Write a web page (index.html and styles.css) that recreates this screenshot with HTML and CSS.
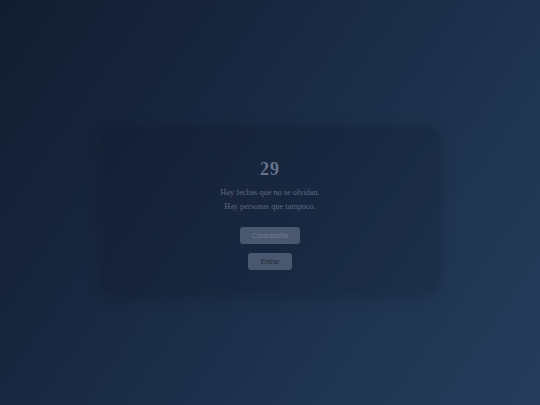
FILE: index.html
```html
<!DOCTYPE html>
<html lang="es">
<head>
  <meta charset="UTF-8" />
  <meta name="viewport" content="width=device-width, initial-scale=1" />
  <title>29</title>
  <link rel="stylesheet" href="styles.css">
</head>
<body>

  <div class="lock">
    <div class="card">
      <h1 class="day">29</h1>
      <p class="line">Hay fechas que no se olvidan.</p>
      <p class="line">Hay personas que tampoco.</p>

      <form class="login" onsubmit="return false;">
        <input type="password" class="pass" placeholder="Contraseña" />
        <button type="submit" class="enter">Entrar</button>
      </form>
    </div>
  </div>

</body>
</html>
```

FILE: styles.css
```css
* {
  box-sizing: border-box;
  margin: 0;
  padding: 0;
}
body {
  min-height: 100vh;
  background: linear-gradient(125deg, #121c2f 0%, #1a2b45 45%, #203653 75%, #243d5b 100%);
  font-family: 'Liberation Serif', 'Times New Roman', serif;
  color: #616c80;
}
.lock {
  min-height: 100vh;
  display: flex;
  align-items: center;
  justify-content: center;
  padding-top: 14px;
}
.card {
  width: 337px;
  height: 165px;
  border-radius: 12px;
  background: rgba(12, 20, 36, 0.22);
  box-shadow: 0 4px 18px rgba(0, 0, 0, 0.18);
  display: flex;
  flex-direction: column;
  align-items: center;
  padding-top: 32px;
}
.day {
  font-size: 18px;
  font-weight: bold;
  letter-spacing: 1px;
  line-height: 20px;
  color: #67758b;
  margin-bottom: 7px;
}
.line {
  font-size: 8.3px;
  line-height: 14px;
  color: #5f6a7e;
}
.login {
  margin-top: 13px;
  display: flex;
  flex-direction: column;
  align-items: center;
  gap: 9px;
}
.pass {
  width: 60px;
  height: 17px;
  border: none;
  border-radius: 3px;
  background: #4a586f;
  font-family: 'Liberation Sans', Arial, sans-serif;
  font-size: 7px;
  text-align: center;
  color: #1f2a3c;
  outline: none;
}
.pass::placeholder {
  color: #6f7c92;
}
.enter {
  width: 44px;
  height: 17px;
  border: none;
  border-radius: 3px;
  background: #4a586f;
  font-family: 'Liberation Sans', Arial, sans-serif;
  font-size: 7px;
  color: #1c2536;
  cursor: pointer;
}
```
